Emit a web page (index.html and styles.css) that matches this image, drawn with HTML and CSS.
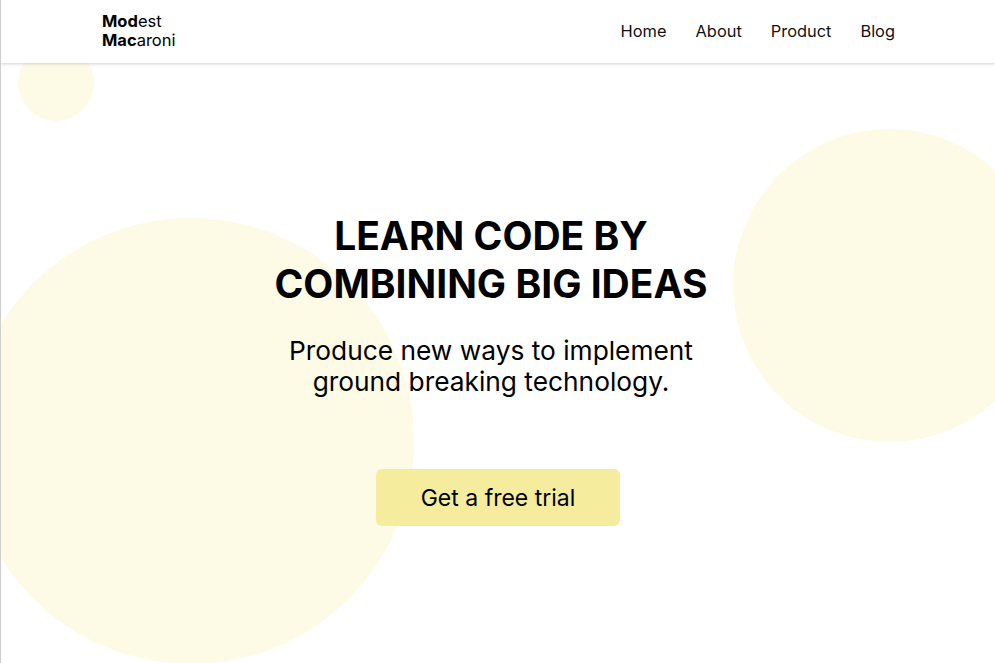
FILE: index.html
```html
<!DOCTYPE html>
<html lang="en">
<head>
<meta charset="utf-8">
<title>Modest Macaroni</title>
<link rel="stylesheet" href="styles.css">
</head>
<body>
<div class="page">
  <div class="blob blob-small"></div>
  <div class="blob blob-left"></div>
  <div class="blob blob-right"></div>
  <header class="header">
    <a class="logo" href="#"><span><b>Mod</b>est</span><span><b>Mac</b>aroni</span></a>
    <nav class="nav">
      <a href="#">Home</a>
      <a href="#">About</a>
      <a href="#">Product</a>
      <a href="#">Blog</a>
    </nav>
  </header>
  <main class="hero">
    <h1 class="title">LEARN CODE BY COMBINING BIG IDEAS</h1>
    <p class="subtitle">Produce new ways to implement ground breaking technology.</p>
    <a class="cta" href="#">Get a free trial</a>
  </main>
</div>
</body>
</html>
```

FILE: styles.css
```css
* { box-sizing: border-box; }
html, body { margin: 0; padding: 0; background: #fff; }
body {
  font-family: Inter, "Noto Sans", "Liberation Sans", sans-serif;
  color: #000;
}
.page {
  position: relative;
  height: 663px;
  overflow: hidden;
  border-left: 1px solid #cfcfcf;
}
.blob {
  position: absolute;
  border-radius: 50%;
  background: #fdfbe6;
  z-index: 0;
}
.blob-small { left: 17px; top: 45px; width: 76px; height: 76px; }
.blob-left { left: -33px; top: 218px; width: 446px; height: 446px; }
.blob-right { left: 732px; top: 129px; width: 313px; height: 313px; }

.header {
  position: relative;
  z-index: 2;
  height: 63px;
  background: #fff;
  display: flex;
  align-items: center;
  justify-content: space-between;
  padding: 0 100px 0 101px;
  box-shadow: 0 1px 3px rgba(0,0,0,0.18);
}
.logo {
  display: flex;
  flex-direction: column;
  font-size: 16.5px;
  line-height: 19px;
  color: #000;
  text-decoration: none;
  padding-bottom: 2px;
}
.logo b { font-weight: 700; }
.nav {
  display: flex;
  gap: 29px;
  padding-bottom: 2px;
}
.nav a {
  font-size: 16.4px;
  color: #111;
  text-decoration: none;
}
.hero {
  position: relative;
  z-index: 1;
  display: flex;
  flex-direction: column;
  align-items: center;
  text-align: center;
  padding-top: 149px;
}
.title {
  margin: 0 14px 0 0;
  max-width: 470px;
  font-size: 39px;
  line-height: 48px;
  font-weight: 700;
}
.subtitle {
  margin: 27px 14px 0 0;
  max-width: 440px;
  font-size: 26.3px;
  line-height: 31px;
  font-weight: 400;
}
.cta {
  margin-top: 72px;
  width: 244px;
  height: 57px;
  border-radius: 6px;
  background: #f5ec9d;
  color: #000;
  text-decoration: none;
  font-size: 23px;
  display: flex;
  align-items: center;
  justify-content: center;
}
```
